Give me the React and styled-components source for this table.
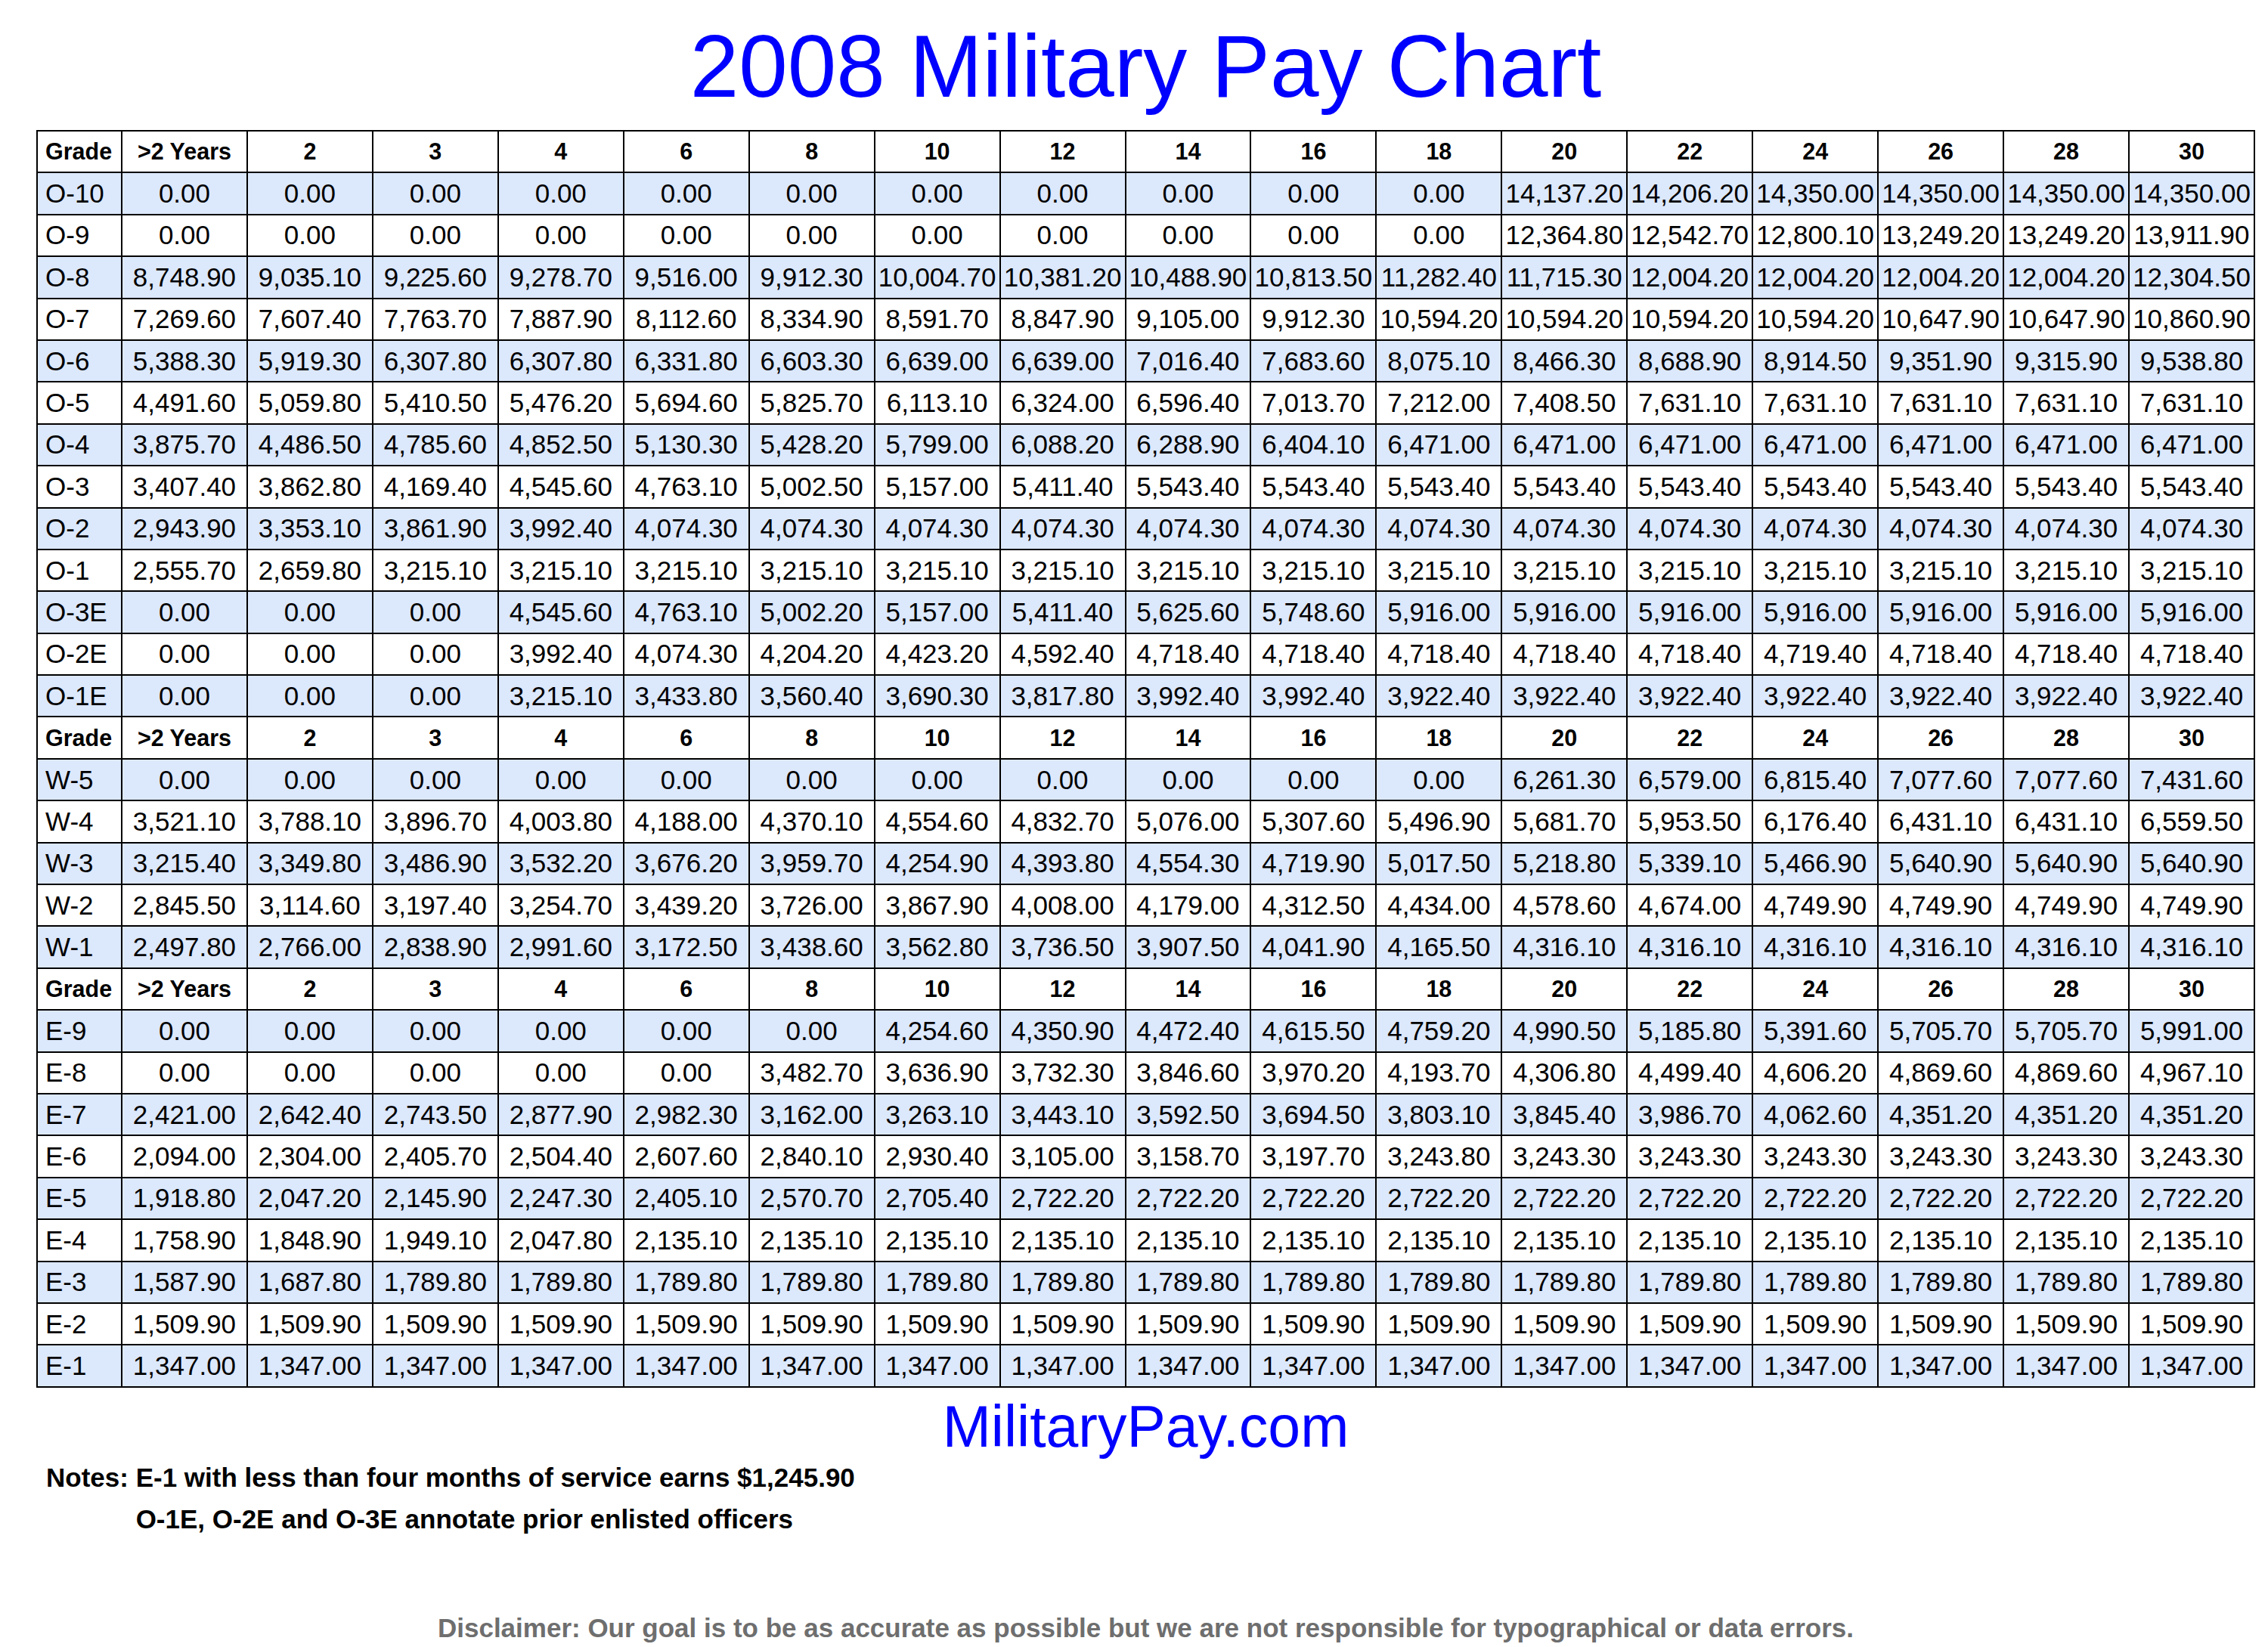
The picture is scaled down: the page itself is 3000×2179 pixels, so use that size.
import React from "react";
import styled, { createGlobalStyle } from "styled-components";

const GlobalStyle = createGlobalStyle`
  html, body {
    margin: 0;
    padding: 0;
    background: #ffffff;
  }
  body {
    font-family: "Liberation Sans", Arial, Helvetica, sans-serif;
    color: #000;
  }
`;

const Page = styled.div`
  width: 2935px;
  padding: 22px 0 0 48px;
  display: flex;
  flex-direction: column;
`;

const Title = styled.h1`
  margin: 0 0 17px;
  font-size: 116px;
  line-height: 133px;
  font-weight: 400;
  color: #0000ff;
  text-align: center;
`;

const ChartTable = styled.table`
  width: 2935px;
  table-layout: fixed;
  border-collapse: collapse;
  border: 2px solid #000;
`;

const Row = styled.tr`
  height: 55.4px;
  background: ${(p) => (p.$shaded ? "#dce8fc" : "#ffffff")};
`;

const Cell = styled.td`
  border: 2px solid #000;
  padding: 0;
  white-space: nowrap;
  overflow: hidden;
  vertical-align: middle;
`;

const HeaderCell = styled(Cell)`
  font-size: 30.5px;
  font-weight: 700;
  text-align: ${(p) => (p.$left ? "left" : "center")};
  padding-left: ${(p) => (p.$left ? "10px" : "0")};
`;

const GradeCell = styled(Cell)`
  font-size: 35px;
  text-align: left;
  padding-left: 10px;
`;

const ValueCell = styled(Cell)`
  font-size: 35px;
  text-align: center;
`;

const Site = styled.div`
  margin-top: 11px;
  font-size: 77px;
  line-height: 80px;
  color: #0000ff;
  text-align: center;
`;

const Notes = styled.div`
  display: grid;
  grid-template-columns: max-content max-content;
  padding-left: 13px;
  font-size: 35px;
  font-weight: 700;
  line-height: 55px;
`;

const NoteLabel = styled.span`
  grid-row: span 2;
  white-space: pre;
`;

const NoteText = styled.span`
  white-space: nowrap;
`;

const Disclaimer = styled.div`
  margin-top: 97px;
  font-size: 35px;
  font-weight: 700;
  line-height: 40px;
  color: #6e6e6e;
  text-align: center;
`;

const YEARS = [">2 Years", "2", "3", "4", "6", "8", "10", "12", "14", "16", "18", "20", "22", "24", "26", "28", "30"];

const rep = (v, n) => Array(n).fill(v);
const Z = "0.00";

const SECTIONS = [
  [
    ["O-10", [...rep(Z, 11), "14,137.20", "14,206.20", "14,350.00", "14,350.00", "14,350.00", "14,350.00"]],
    ["O-9", [...rep(Z, 11), "12,364.80", "12,542.70", "12,800.10", "13,249.20", "13,249.20", "13,911.90"]],
    ["O-8", ["8,748.90", "9,035.10", "9,225.60", "9,278.70", "9,516.00", "9,912.30", "10,004.70", "10,381.20", "10,488.90", "10,813.50", "11,282.40", "11,715.30", "12,004.20", "12,004.20", "12,004.20", "12,004.20", "12,304.50"]],
    ["O-7", ["7,269.60", "7,607.40", "7,763.70", "7,887.90", "8,112.60", "8,334.90", "8,591.70", "8,847.90", "9,105.00", "9,912.30", "10,594.20", "10,594.20", "10,594.20", "10,594.20", "10,647.90", "10,647.90", "10,860.90"]],
    ["O-6", ["5,388.30", "5,919.30", "6,307.80", "6,307.80", "6,331.80", "6,603.30", "6,639.00", "6,639.00", "7,016.40", "7,683.60", "8,075.10", "8,466.30", "8,688.90", "8,914.50", "9,351.90", "9,315.90", "9,538.80"]],
    ["O-5", ["4,491.60", "5,059.80", "5,410.50", "5,476.20", "5,694.60", "5,825.70", "6,113.10", "6,324.00", "6,596.40", "7,013.70", "7,212.00", "7,408.50", ...rep("7,631.10", 5)]],
    ["O-4", ["3,875.70", "4,486.50", "4,785.60", "4,852.50", "5,130.30", "5,428.20", "5,799.00", "6,088.20", "6,288.90", "6,404.10", ...rep("6,471.00", 7)]],
    ["O-3", ["3,407.40", "3,862.80", "4,169.40", "4,545.60", "4,763.10", "5,002.50", "5,157.00", "5,411.40", ...rep("5,543.40", 9)]],
    ["O-2", ["2,943.90", "3,353.10", "3,861.90", "3,992.40", ...rep("4,074.30", 13)]],
    ["O-1", ["2,555.70", "2,659.80", ...rep("3,215.10", 15)]],
    ["O-3E", [...rep(Z, 3), "4,545.60", "4,763.10", "5,002.20", "5,157.00", "5,411.40", "5,625.60", "5,748.60", ...rep("5,916.00", 7)]],
    ["O-2E", [...rep(Z, 3), "3,992.40", "4,074.30", "4,204.20", "4,423.20", "4,592.40", ...rep("4,718.40", 5), "4,719.40", ...rep("4,718.40", 3)]],
    ["O-1E", [...rep(Z, 3), "3,215.10", "3,433.80", "3,560.40", "3,690.30", "3,817.80", "3,992.40", "3,992.40", ...rep("3,922.40", 7)]],
  ],
  [
    ["W-5", [...rep(Z, 11), "6,261.30", "6,579.00", "6,815.40", "7,077.60", "7,077.60", "7,431.60"]],
    ["W-4", ["3,521.10", "3,788.10", "3,896.70", "4,003.80", "4,188.00", "4,370.10", "4,554.60", "4,832.70", "5,076.00", "5,307.60", "5,496.90", "5,681.70", "5,953.50", "6,176.40", "6,431.10", "6,431.10", "6,559.50"]],
    ["W-3", ["3,215.40", "3,349.80", "3,486.90", "3,532.20", "3,676.20", "3,959.70", "4,254.90", "4,393.80", "4,554.30", "4,719.90", "5,017.50", "5,218.80", "5,339.10", "5,466.90", "5,640.90", "5,640.90", "5,640.90"]],
    ["W-2", ["2,845.50", "3,114.60", "3,197.40", "3,254.70", "3,439.20", "3,726.00", "3,867.90", "4,008.00", "4,179.00", "4,312.50", "4,434.00", "4,578.60", "4,674.00", ...rep("4,749.90", 4)]],
    ["W-1", ["2,497.80", "2,766.00", "2,838.90", "2,991.60", "3,172.50", "3,438.60", "3,562.80", "3,736.50", "3,907.50", "4,041.90", "4,165.50", ...rep("4,316.10", 6)]],
  ],
  [
    ["E-9", [...rep(Z, 6), "4,254.60", "4,350.90", "4,472.40", "4,615.50", "4,759.20", "4,990.50", "5,185.80", "5,391.60", "5,705.70", "5,705.70", "5,991.00"]],
    ["E-8", [...rep(Z, 5), "3,482.70", "3,636.90", "3,732.30", "3,846.60", "3,970.20", "4,193.70", "4,306.80", "4,499.40", "4,606.20", "4,869.60", "4,869.60", "4,967.10"]],
    ["E-7", ["2,421.00", "2,642.40", "2,743.50", "2,877.90", "2,982.30", "3,162.00", "3,263.10", "3,443.10", "3,592.50", "3,694.50", "3,803.10", "3,845.40", "3,986.70", "4,062.60", ...rep("4,351.20", 3)]],
    ["E-6", ["2,094.00", "2,304.00", "2,405.70", "2,504.40", "2,607.60", "2,840.10", "2,930.40", "3,105.00", "3,158.70", "3,197.70", "3,243.80", ...rep("3,243.30", 6)]],
    ["E-5", ["1,918.80", "2,047.20", "2,145.90", "2,247.30", "2,405.10", "2,570.70", "2,705.40", ...rep("2,722.20", 10)]],
    ["E-4", ["1,758.90", "1,848.90", "1,949.10", "2,047.80", ...rep("2,135.10", 13)]],
    ["E-3", ["1,587.90", "1,687.80", ...rep("1,789.80", 15)]],
    ["E-2", rep("1,509.90", 17)],
    ["E-1", rep("1,347.00", 17)],
  ],
];

function HeaderRow() {
  return (
    <Row>
      <HeaderCell $left>Grade</HeaderCell>
      {YEARS.map((y) => (
        <HeaderCell key={y}>{y}</HeaderCell>
      ))}
    </Row>
  );
}

export default function App() {
  return (
    <>
      <GlobalStyle />
      <Page>
        <Title>2008 Military Pay Chart</Title>
        <ChartTable>
          <colgroup>
            <col style={{ width: "112px" }} />
            {YEARS.map((y) => (
              <col key={y} />
            ))}
          </colgroup>
          <tbody>
            {SECTIONS.map((section, si) => (
              <React.Fragment key={si}>
                <HeaderRow />
                {section.map(([grade, values], ri) => (
                  <Row key={grade} $shaded={ri % 2 === 0}>
                    <GradeCell>{grade}</GradeCell>
                    {values.map((v, i) => (
                      <ValueCell key={i}>{v}</ValueCell>
                    ))}
                  </Row>
                ))}
              </React.Fragment>
            ))}
          </tbody>
        </ChartTable>
        <Site>MilitaryPay.com</Site>
        <Notes>
          <NoteLabel>Notes: </NoteLabel>
          <NoteText>E-1 with less than four months of service earns $1,245.90</NoteText>
          <NoteText>O-1E, O-2E and O-3E annotate prior enlisted officers</NoteText>
        </Notes>
        <Disclaimer>
          Disclaimer: Our goal is to be as accurate as possible but we are not responsible for typographical or data errors.
        </Disclaimer>
      </Page>
    </>
  );
}
